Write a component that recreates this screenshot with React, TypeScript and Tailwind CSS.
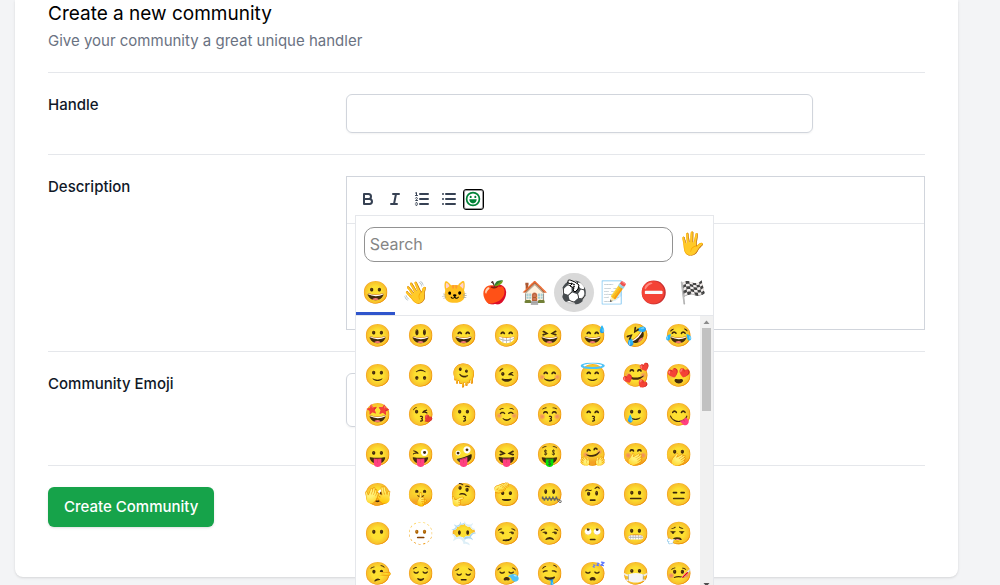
import { ReactNode } from "react";

const categories = ["😀", "👋", "🐱", "🍎", "🏠", "⚽", "📝", "⛔", "🏁"];
const categoryNames = ["Smileys", "People", "Animals", "Food", "Places", "Activities", "Objects", "Symbols", "Flags"];

const emojis = [
  "😀", "😃", "😄", "😁", "😆", "😅", "🤣", "😂",
  "🙂", "🙃", "🫠", "😉", "😊", "😇", "🥰", "😍",
  "🤩", "😘", "😗", "☺️", "😚", "😙", "🥲", "😋",
  "😛", "😜", "🤪", "😝", "🤑", "🤗", "🤭", "🫢",
  "🫣", "🤫", "🤔", "🫡", "🤐", "🤨", "😐", "😑",
  "😶", "🫥", "😶‍🌫️", "😏", "😒", "🙄", "😬", "😮‍💨",
  "🤥", "😌", "😔", "😪", "🤤", "😴", "😷", "🤒",
];

function FormRow({ label, htmlFor, children }: { label: string; htmlFor: string; children: ReactNode }) {
  return (
    <div className="grid grid-cols-3 gap-4 border-t border-gray-200 py-[21px]">
      <label htmlFor={htmlFor} className="text-[15px] leading-[22px] font-medium text-gray-900">
        {label}
      </label>
      <div className="col-span-2">{children}</div>
    </div>
  );
}

function ToolButton({ label, children }: { label: string; children: ReactNode }) {
  return (
    <button type="button" aria-label={label} className="flex w-[27px]">
      <svg viewBox="0 0 18 18" className="size-[18px]" fill="none" stroke="currentColor" strokeWidth="2" strokeLinecap="round" strokeLinejoin="round">
        {children}
      </svg>
    </button>
  );
}

function PointerHand() {
  return (
    <svg viewBox="0 0 16 16" className="absolute top-1.5 left-3 size-4" fill="white" stroke="black" strokeLinejoin="round" aria-hidden="true">
      <path d="M2 1.5C3 .8 4 1 5 1.4L9 3l4 3-1 4-3 3-2-2 1-2-4-2 2-2-4-1Z" />
      <path d="M5 4l4 2M7 7l2 1" fill="none" />
    </svg>
  );
}

function EmojiPicker() {
  return (
    <div className="absolute top-[38px] left-2 z-10 w-[359px] border border-gray-200 bg-white">
      <div className="flex items-center gap-1.5 pt-[11px] pr-2.5 pl-2">
        <input
          type="search"
          aria-label="Search emojis"
          placeholder="Search"
          className="h-[35px] min-w-0 flex-1 rounded-[10px] border border-[#929292] px-[5px] pb-0.5 text-base text-gray-900 placeholder:text-[#858585]"
        />
        <button type="button" aria-label="Skin tone" className="w-6 pb-1 text-center text-[22px] leading-7">
          🖐
        </button>
      </div>
      <div className="mt-[11px] grid grid-cols-9 border-b border-gray-200">
        {categories.map((emoji, i) => (
          <button
            key={emoji}
            type="button"
            aria-label={categoryNames[i]}
            className={`relative flex h-[42px] flex-col border-b-3 ${i === 0 ? "border-[#2f55cc]" : "border-transparent"}`}
          >
            <span
              className={`flex h-[39px] w-full items-center justify-center pb-0.5 pl-px text-[22px] leading-none ${i === 5 ? "rounded-full bg-[#d9d9d9]" : ""}`}
            >
              {emoji}
            </span>
            {i === 5 && <PointerHand />}
          </button>
        ))}
      </div>
      <div className="flex items-start">
        <div className="grid h-[278px] flex-1 grid-cols-8 grid-rows-7">
          {emojis.map((emoji) => (
            <button key={emoji} type="button" className="pb-0.5 pl-0.5 text-center text-[22px] leading-none">
              {emoji}
            </button>
          ))}
        </div>
        <div className="flex h-[278px] w-[13px] flex-col items-center bg-[#f1f1f1]">
          <svg viewBox="0 0 13 12" className="h-3 w-[13px] shrink-0">
            <path d="M3.5 8h6l-3-3.5Z" fill="#8b8b8b" />
          </svg>
          <div className="h-[83px] w-[9px] bg-[#c1c1c1]" />
          <svg viewBox="0 0 13 12" className="mt-auto h-3 w-[13px] shrink-0">
            <path d="M3.5 1h6l-3 3.5Z" fill="#505050" />
          </svg>
        </div>
      </div>
    </div>
  );
}

export default function App() {
  return (
    <div className="min-h-screen overflow-hidden bg-gray-100 pr-[42px] pb-2 pl-[15px] font-['Inter','Noto_Color_Emoji',sans-serif]">
      <form className="rounded-b-lg bg-white px-[33px] pb-[50px] shadow">
        <header className="pb-[21px]">
          <h1 className="pt-0.5 text-[19px] leading-6 text-black">Create a new community</h1>
          <p className="mt-1 text-[15px] leading-[21px] text-gray-500">Give your community a great unique handler</p>
        </header>
        <FormRow label="Handle" htmlFor="handle">
          <input id="handle" type="text" className="block h-[39px] w-full max-w-[467px] rounded-md border border-gray-300 px-3 shadow-xs" />
        </FormRow>
        <FormRow label="Description" htmlFor="description">
          <div className="relative border border-gray-300">
            <div className="flex h-[47px] items-center border-b border-gray-200 pb-0.5 pl-3 text-gray-700">
              <ToolButton label="Bold">
                <path d="M5 4h4.5a2.5 2.5 0 0 1 0 5H5Z" />
                <path d="M5 9h5.5a2.5 2.5 0 0 1 0 5H5Z" />
              </ToolButton>
              <ToolButton label="Italic">
                <path d="M7 4h6M5 14h6M8 14l2-10" />
              </ToolButton>
              <ToolButton label="Ordered list">
                <path d="M7 4h8M7 9h8M7 14h8" />
                <path d="M2.5 3l1-.5v3M2.5 5.5h2" strokeWidth="1" />
                <path d="M4.5 10.5h-2c0-.234 1.85-1.076 1.85-2.234A.959.959 0 0 0 2.5 8.156" strokeWidth="1" />
                <path d="M2.5 14.846a.959.959 0 0 0 1.85-.109A.7.7 0 0 0 3.75 14a.688.688 0 0 0 .6-.736.959.959 0 0 0-1.85-.109" strokeWidth="1" />
              </ToolButton>
              <ToolButton label="Bullet list">
                <path d="M6 4h9M6 9h9M6 14h9M3 4h0M3 9h0M3 14h0" />
              </ToolButton>
              <button type="button" aria-label="Emoji" className="-ml-1 flex size-[21px] items-center justify-center rounded-[3px] border border-black text-green-700 ring-1 ring-black/40 ring-inset">
                <svg viewBox="0 0 18 18" className="size-[18px] shrink-0" fill="currentColor">
                  <circle cx="9" cy="9" r="6.4" fill="none" stroke="currentColor" strokeWidth="1.7" />
                  <ellipse cx="6.7" cy="6.9" rx="1" ry="1.2" />
                  <ellipse cx="11.3" cy="6.9" rx="1" ry="1.2" />
                  <path d="M5.3 9.3h7.4c0 2.5-1.6 4.1-3.7 4.1s-3.700-1.600-3.700-4.100Z" />
                </svg>
              </button>
            </div>
            <textarea id="description" className="block h-[105px] w-full resize-none p-3" />
            <EmojiPicker />
          </div>
        </FormRow>
        <FormRow label="Community Emoji" htmlFor="emoji">
          <input id="emoji" type="text" className="mb-[17px] block h-[54px] w-20 rounded-md border border-gray-300 text-center shadow-xs" />
        </FormRow>
        <div className="border-t border-gray-200 pt-[21px]">
          <button type="submit" className="h-10 rounded-md bg-[#16a34a] px-4 text-[15px] font-medium text-white shadow-sm">
            Create Community
          </button>
        </div>
      </form>
    </div>
  );
}
